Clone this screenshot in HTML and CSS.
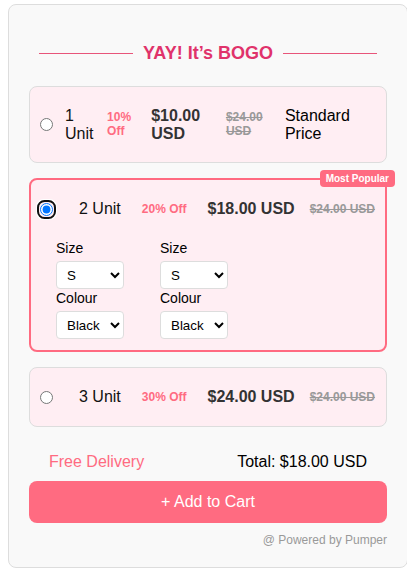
FILE: index.html
```html
<!DOCTYPE html>
<html lang="en">
<head>
    <meta charset="UTF-8">
    <meta name="viewport" content="width=device-width, initial-scale=1.0">
    <title>BOGO Offer</title>
    <link rel="stylesheet" href="styles.css">
</head>
<body>
    <div class="bogo-box">
        <div class="bogo-title">
            <span class="line"></span>
            <h2>YAY! It’s BOGO</h2>
            <span class="line"></span>
        </div>

        <div class="option">
            <label class="option-row standard">
                <input type="radio" name="bundle">
                <span class="unit">1 Unit</span>
                <span class="off">10% Off</span>
                <span class="price">$10.00 USD</span>
                <span class="was">$24.00 USD</span>
                <span class="note">Standard Price</span>
            </label>
        </div>

        <div class="option selected">
            <span class="badge">Most Popular</span>
            <label class="option-row">
                <input type="radio" name="bundle" checked autofocus>
                <span class="unit">2 Unit</span>
                <span class="off">20% Off</span>
                <span class="price">$18.00 USD</span>
                <span class="was">$24.00 USD</span>
            </label>
            <div class="variants">
                <div class="variant">
                    <label>Size</label>
                    <select>
                        <option>S</option>
                        <option>M</option>
                        <option>L</option>
                    </select>
                    <label>Colour</label>
                    <select>
                        <option>Black</option>
                        <option>White</option>
                    </select>
                </div>
                <div class="variant">
                    <label>Size</label>
                    <select>
                        <option>S</option>
                        <option>M</option>
                        <option>L</option>
                    </select>
                    <label>Colour</label>
                    <select>
                        <option>Black</option>
                        <option>White</option>
                    </select>
                </div>
            </div>
        </div>

        <div class="option">
            <label class="option-row">
                <input type="radio" name="bundle">
                <span class="unit">3 Unit</span>
                <span class="off">30% Off</span>
                <span class="price">$24.00 USD</span>
                <span class="was">$24.00 USD</span>
            </label>
        </div>

        <div class="summary">
            <span class="delivery">Free Delivery</span>
            <span class="total">Total: $18.00 USD</span>
        </div>

        <button class="cart-btn">+ Add to Cart</button>

        <p class="powered">@ Powered by Pumper</p>
    </div>
</body>
</html>
```

FILE: styles.css
```css
body {
    font-family: Arial, "Liberation Sans", sans-serif;
    margin: 4px 8px;
    background-color: #fff;
    color: #000;
}

.bogo-box {
    box-sizing: border-box;
    width: 400px;
    padding: 20px;
    background: #f9f9f9;
    border: 1px solid #ddd;
    border-radius: 8px;
}

.bogo-title {
    display: flex;
    align-items: center;
    margin: 18px 10px 22px;
}

.bogo-title .line {
    flex: 1;
    height: 1px;
    background: #e8557a;
}

.bogo-title h2 {
    margin: 0 10px;
    font-size: 18px;
    color: #e0336b;
}

.option {
    position: relative;
    margin-bottom: 15px;
    padding: 20px 10px;
    background: #ffeef3;
    border: 1px solid #ddd;
    border-radius: 8px;
}

.option.selected {
    padding: 20px 9px 10px;
    border: 2px solid #ff6b81;
}

.option-row {
    display: flex;
    align-items: center;
    gap: 21px;
    font-size: 16px;
    cursor: pointer;
}

.option-row input {
    flex-shrink: 0;
    margin: 0 5px 0 0;
}

.unit {
    color: #111;
}

.off {
    color: #ff6b81;
    font-size: 12px;
    font-weight: bold;
}

.price {
    color: #333;
    font-weight: bold;
}

.was {
    margin-left: -6px;
    color: #999;
    font-size: 12px;
    font-weight: bold;
    text-decoration: line-through;
}

/* first row has one more column, so it wraps */
.option-row.standard {
    gap: 12px;
    padding-right: 15px;
    line-height: 1.1;
}

.option-row.standard input {
    margin-right: 0;
}

.option-row.standard .was {
    margin-left: 0;
}

.badge {
    position: absolute;
    top: -10px;
    right: -10px;
    padding: 3px 6px;
    background: #ff6b81;
    color: #fff;
    font-size: 10px;
    font-weight: bold;
    border-radius: 4px;
}

.variants {
    display: flex;
    gap: 36px;
    margin: 22px 0 0 16px;
}

.variant {
    display: flex;
    flex-direction: column;
    align-items: flex-start;
}

.variant label {
    font-size: 14px;
    margin-bottom: 5px;
}

.variant select {
    width: 68px;
    height: 28px;
    margin-bottom: 1px;
    padding: 0 6px;
    font-family: Arial, "Liberation Sans", sans-serif;
    background: #fff;
    border: 1px solid #ddd;
    border-radius: 4px;
}

.summary {
    display: flex;
    justify-content: space-between;
    padding: 11px 20px 10px;
    font-size: 16px;
}

.delivery {
    color: #ff6b81;
}

.cart-btn {
    width: 100%;
    padding: 12px;
    background: #ff6b81;
    color: #fff;
    font-family: Arial, "Liberation Sans", sans-serif;
    font-size: 16px;
    border: none;
    border-radius: 8px;
    cursor: pointer;
}

.powered {
    margin: 10px 0 0;
    text-align: right;
    font-size: 12px;
    color: #999;
}
```
